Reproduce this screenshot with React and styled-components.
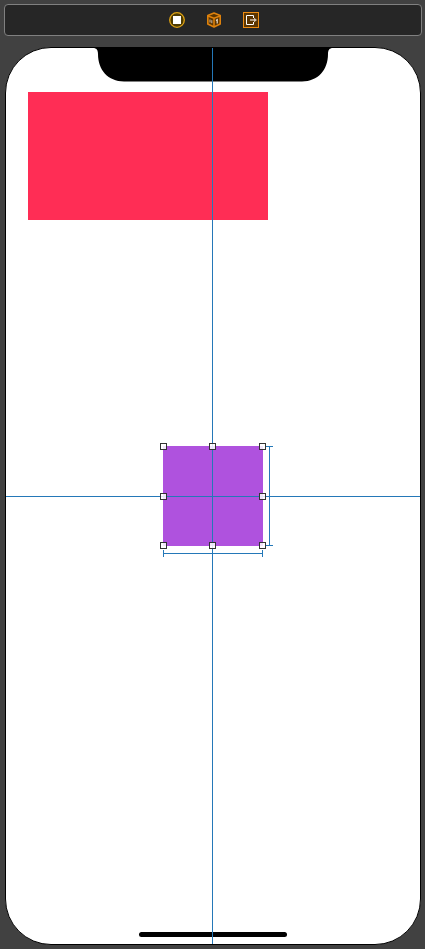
import React from 'react';
import styled, { createGlobalStyle } from 'styled-components';

const handles = ['nw', 'n', 'ne', 'w', 'center', 'e', 'sw', 's', 'se'];

const ViewControllerIcon = () => (
    <Icon viewBox="0 0 16 16">
        <circle cx="8" cy="8" r="7.3" fill="#4d3a00" stroke="#e0a414" strokeWidth="1.3" />
        <rect x="4" y="4" width="8" height="8" fill="#fff" />
    </Icon>
);

const ResponderIcon = () => (
    <Icon viewBox="0 0 16 16">
        <path d="M8 1 14.2 3.5V12L8 15 1.8 12V3.5Z" fill="#5c3500" stroke="#df820c" strokeWidth="1.6" strokeLinejoin="round" />
        <path d="M2 4 8 6.2 14 4M8 6.2V15" fill="none" stroke="#df820c" strokeWidth="1.5" />
        <path d="M4 7.5v3M5.8 8.2v3" fill="none" stroke="#c9b8a3" strokeWidth="1" />
        <path d="M10 8.4l1.2-.8v4" fill="none" stroke="#e6dccf" strokeWidth="1.2" />
    </Icon>
);

const ExitIcon = () => (
    <Icon viewBox="0 0 16 16">
        <rect x=".5" y=".5" width="15" height="15" fill="#5c3500" stroke="#ee8d12" />
        <path d="M10.5 6V3.5h-7v9h7V10" fill="none" stroke="#fff" />
        <path d="M7 8h4" stroke="#d8cabb" strokeWidth="1.4" />
        <path d="M11 5.8 14 8l-3 2.2Z" fill="#d8cabb" />
    </Icon>
);

const App = () => {
    return (<Page>
        <GlobalStyle />
        <Toolbar>
            <ViewControllerIcon />
            <ResponderIcon />
            <ExitIcon />
        </Toolbar>
        <Phone>
            <Notch viewBox="0 0 240 34">
                <path d="M0 0C3.5 0 5 2 5 6C5 22 15 33.4 31 33.4H209C225 33.4 235 22 235 6C235 2 236.5 0 240 0Z" />
            </Notch>
            <RedView />
            <HomeIndicator />

            {/* everything below lies over the canvas */}
            <PurpleView />
            <VerticalGuide />
            <HorizontalGuide />
            <Selection>
                <Handles>
                    {
                        handles.map(name => {
                            return name === 'center' ? <span key={name} /> : <Handle key={name} />
                        })
                    }
                </Handles>
                <HeightBracket />
                <WidthBracket />
            </Selection>
        </Phone>
    </Page>);
}

export default App;

const GlobalStyle = createGlobalStyle`
    body {
        margin: 0;
        background: #414141;
    }
    * {
        box-sizing: border-box;
    }
`

const Page = styled.div`
    display: flex;
    flex-direction: column;
    gap: 11px;
    width: 425px;
    height: 949px;
    padding: 4px 3px 4px 4px;
    overflow: hidden;
`

const Toolbar = styled.div`
    display: flex;
    align-items: center;
    justify-content: center;
    gap: 21px;
    height: 32px;
    flex-shrink: 0;
    padding-left: 2px;
    background: #262626;
    border: 1px solid #808080;
    border-radius: 4px;
`

const Icon = styled.svg`
    width: 16px;
    height: 16px;
`

const Phone = styled.div`
    position: relative;
    display: flex;
    flex-direction: column;
    flex-shrink: 0;
    width: 416px;
    height: 898px;
    margin-left: 1px;
    padding-bottom: 7px;
    background: #fff;
    border: 1px solid #000;
    border-radius: 46px;
`

const Notch = styled.svg`
    align-self: center;
    width: 240px;
    height: 34px;
`

const RedView = styled.div`
    width: 240px;
    height: 128px;
    margin: 10px 0 0 22px;
    background: #ff2d55;
`

const HomeIndicator = styled.div`
    align-self: center;
    width: 148px;
    height: 5px;
    margin-top: auto;
    background: #000;
    border-radius: 3px;
`

const PurpleView = styled.div`
    position: absolute;
    left: 157px;
    top: 398px;
    width: 100px;
    height: 100px;
    background: #af52de;
`

const VerticalGuide = styled.div`
    position: absolute;
    left: 206px;
    top: 0;
    bottom: 0;
    width: 1px;
    background: #2478b8;
`

const HorizontalGuide = styled.div`
    position: absolute;
    left: 0;
    right: 0;
    top: 448px;
    height: 1px;
    background: #2478b8;
`

const Selection = styled.div`
    position: absolute;
    left: 154px;
    top: 395px;
    display: grid;
    grid-template-columns: 106px 7px;
    grid-template-rows: 106px 8px;
`

const Handles = styled.div`
    display: grid;
    grid-template-columns: 49px 50px 7px;
    grid-template-rows: 50px 49px 7px;
`

const Handle = styled.div`
    width: 7px;
    height: 7px;
    background: rgba(255, 255, 255, 0.85);
    border: 1px solid #333;
`

const HeightBracket = styled.div`
    height: 100px;
    margin-top: 3px;
    border: solid #2478b8;
    border-width: 1px 0;
    background: linear-gradient(#2478b8, #2478b8) center / 1px 100% no-repeat;
`

const WidthBracket = styled.div`
    width: 100px;
    height: 7px;
    margin: 1px 0 0 3px;
    border: solid #2478b8;
    border-width: 0 1px;
    background: linear-gradient(#2478b8, #2478b8) center / 100% 1px no-repeat;
`;
